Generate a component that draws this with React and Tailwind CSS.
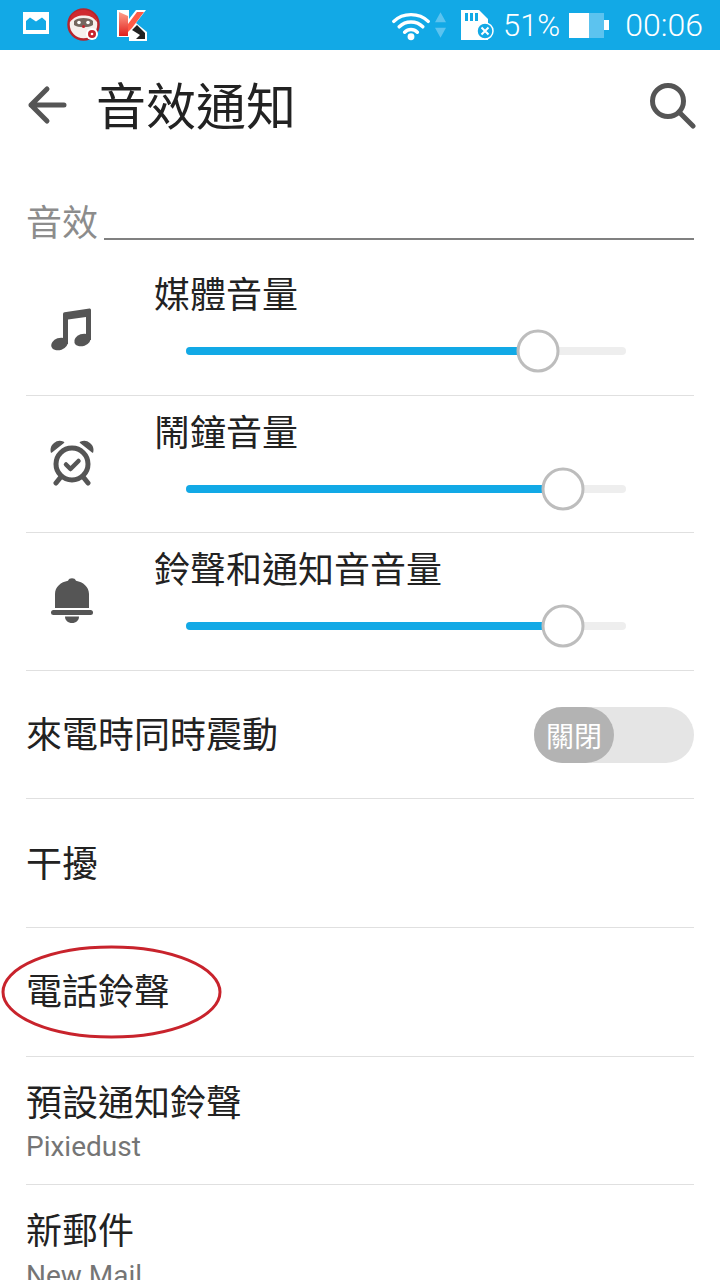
import React from 'react';

const cjk = "font-['Noto_Sans_CJK_TC','Noto_Sans_CJK_SC',sans-serif]";

const MusicIcon = () => (
  <svg width="44" height="44" viewBox="0 0 44 44" fill="#555555">
    <path d="M13 7 Q13 5.500 14.500 5.300 L39.500 1.500 Q41 1.300 41 3 L41 33 L36 33 L36 10 L18 12.500 L18 37 L13 37 Z" />
    <ellipse cx="9.500" cy="37" rx="8.500" ry="6" transform="rotate(-20 9.500 37)" />
    <ellipse cx="32.500" cy="33" rx="8.500" ry="6" transform="rotate(-20 32.500 33)" />
  </svg>
);

const AlarmIcon = () => (
  <svg width="44" height="46" viewBox="0 0 44 46" fill="none">
    <circle cx="22" cy="24" r="16" stroke="#555555" strokeWidth="5" />
    <path d="M16 24.500 L20.500 29 L28.500 21" stroke="#555555" strokeWidth="4.500" strokeLinecap="round" strokeLinejoin="round" />
    <path d="M1.500 12 C0 5 7 -0.500 13.500 2.500 Z M42.500 12 C44 5 37 -0.500 30.500 2.500 Z" fill="#555555" stroke="#555555" strokeWidth="1.500" strokeLinejoin="round" />
    <path d="M10 38 L6 43 M34 38 L38 43" stroke="#555555" strokeWidth="5" strokeLinecap="round" />
  </svg>
);

const BellIcon = () => (
  <svg width="44" height="46" viewBox="0 0 44 46" fill="#555555">
    <path d="M5 31 L5 17 C5 10 11 5 18 3.800 C19 0.500 25 0.500 26 3.800 C33 5 39 10 39 17 L39 31 Z" />
    <rect x="1" y="33" width="42" height="5" rx="2.500" />
    <path d="M15 39.500 L29 39.500 C29 43.500 26 46 22 46 C18 46 15 43.500 15 39.500 Z" />
  </svg>
);

const Slider = ({ value }) => (
  <div className="relative h-2 w-[440px] rounded-full bg-[#eeeeee]">
    <div className="h-2 rounded-full bg-[#12a9e6]" style={{ width: value }} />
    <div
      className="absolute top-1/2 h-[43px] w-[43px] -translate-x-1/2 -translate-y-1/2 rounded-full border-[3px] border-[#bdbdbd] bg-white"
      style={{ left: value }}
    />
  </div>
);

const VolumeRow = ({ icon, label, value, iconClass }) => (
  <div className="flex h-[137.500px] items-start border-b border-[#e0e0e0]">
    <div className={`flex w-[92px] justify-center ${iconClass}`}>{icon}</div>
    <div className="flex flex-col pl-[36px] pt-[9px]">
      <div className={`text-[36px] leading-[50px] text-[#222222] ${cjk}`}>{label}</div>
      <div className="ml-[32px] mt-[30px]">
        <Slider value={value} />
      </div>
    </div>
  </div>
);

const Row = ({ children, className = '' }) => (
  <div className={`flex h-[128.700px] items-center border-b border-[#e0e0e0] ${className}`}>{children}</div>
);

const StatusBar = () => (
  <div className="flex h-[50px] shrink-0 items-center bg-[#12a9e6] pl-[23px] pr-[17px] text-white">
    <svg width="26" height="22" viewBox="0 0 26 22" className="mb-1">
      <path fillRule="evenodd" fill="#fff" d="M0 0H26V22H0Z M3 18H23V9L19 5.500L13 9.500L7 5.500L3 9Z" />
    </svg>
    <svg width="34" height="36" viewBox="0 0 34 36" className="ml-[18px]">
      <circle cx="16.500" cy="17.500" r="15" fill="#f6efec" stroke="#b8242c" strokeWidth="2.500" />
      <path d="M3 15 C3 6 10 3 16.500 3 C24 3 30 8 30 15 C26 9.500 22 8.500 16.500 8.500 C11 8.500 7 10 3 15Z" fill="#cf2a30" />
      <path d="M7 14 C10 10 23 10 26 14 L26 18 C22 21 11 21 7 18Z" fill="#75675f" />
      <circle cx="12" cy="15.500" r="1.800" fill="#fff" />
      <circle cx="21" cy="15.500" r="1.800" fill="#fff" />
      <circle cx="16.500" cy="19.500" r="1.500" fill="#c8232c" />
      <circle cx="25" cy="27" r="6" fill="#fff" />
      <circle cx="25" cy="27" r="4" fill="#c8232c" />
      <circle cx="25" cy="27" r="1.300" fill="#fff" />
    </svg>
    <svg width="30" height="31" viewBox="0 0 30 31" className="ml-[16px]">
      <defs>
        <linearGradient id="k" x1="0" y1="0" x2="0" y2="1">
          <stop offset="0" stopColor="#ffa08c" />
          <stop offset="1" stopColor="#e0201c" />
        </linearGradient>
      </defs>
      <path d="M0 0H12V9L19 0H29L19 13L30 22V31H12V27H0Z" fill="#fff" />
      <path d="M2 2L11 6V26H2Z" fill="url(#k)" />
      <path d="M11 14L20 2H27L15 18L11 22Z" fill="#ff5a45" />
      <path d="M15 20L20 15L28 23V29H19L23 25Z" fill="#222" />
    </svg>

    <svg width="38" height="34" viewBox="0 0 42 34" className="ml-auto">
      <path d="M2 13 C12 3 30 3 40 13 M8 19 C15 12 27 12 34 19 M14 25 C18 21 24 21 28 25" fill="none" stroke="#fff" strokeWidth="3.800" strokeLinecap="round" />
      <circle cx="21" cy="30" r="3.800" fill="#fff" />
    </svg>
    <svg width="11" height="28" viewBox="0 0 12 30" className="ml-[5px]">
      <path d="M6 1L12 12H0Z M6 29L12 18H0Z" fill="#5cc3ef" />
    </svg>
    <svg width="33" height="30" viewBox="0 0 33 30" className="ml-[15px]">
      <path d="M0 0H18L27 9V30H0Z" fill="#fff" />
      <path d="M4 3H7V11H4Z M9 3H12V11H9Z M14 3H17V11H14Z" fill="#12a9e6" />
      <circle cx="24" cy="21" r="8" fill="#12a9e6" stroke="#fff" strokeWidth="1.500" />
      <path d="M20.500 17.500L27.500 24.500M27.500 17.500L20.500 24.500" stroke="#fff" strokeWidth="2" />
    </svg>
    <span className="ml-[9px] font-['Roboto',sans-serif] text-[31px] font-light leading-none">51%</span>
    <div className="ml-[9px] flex items-center">
      <div className="flex h-[25px] w-[35px] bg-[#5cc3ef]">
        <div className="h-full w-[20px] bg-white" />
      </div>
      <div className="h-[10px] w-[5px] bg-white" />
    </div>
    <span className="ml-[16px] font-['Roboto',sans-serif] text-[32px] font-light leading-none">00:06</span>
  </div>
);

export default function App() {
  return (
    <div className="h-[1280px] w-[720px] overflow-hidden bg-white">
      <StatusBar />

      {/* Header */}
      <div className="flex h-[110px] items-center pl-[27px] pr-[24px]">
        <svg width="40" height="40" viewBox="0 0 40 40" fill="none" stroke="#555555" strokeWidth="5" strokeLinecap="round" strokeLinejoin="round">
          <path d="M37 20H4 M20 4L4 20L20 36" />
        </svg>
        <h1 className={`mb-[5px] ml-[29px] text-[50px] font-normal leading-none text-[#222222] ${cjk}`}>音效通知</h1>
        <svg width="48" height="48" viewBox="0 0 48 48" fill="none" stroke="#555555" strokeLinecap="round" className="ml-auto">
          <circle cx="20" cy="20" r="15.500" strokeWidth="5" />
          <path d="M31 31L45 45" strokeWidth="5" />
        </svg>
      </div>

      <div className="px-[26px]">
        {/* Section title */}
        <div className="flex h-[98px] items-start pt-[36px]">
          <span className={`text-[36px] leading-[48px] text-[#8c8c8c] ${cjk}`}>音效</span>
          <div className="ml-[6px] mt-[42px] h-[2px] flex-1 bg-[#808080]" />
        </div>

        <VolumeRow icon={<MusicIcon />} label="媒體音量" value={352} iconClass="pt-[49px]" />
        <VolumeRow icon={<AlarmIcon />} label="鬧鐘音量" value={377} iconClass="pt-[44px]" />
        <VolumeRow icon={<BellIcon />} label="鈴聲和通知音音量" value={377} iconClass="pt-[44px]" />

        <Row className="justify-between">
          <span className={`-mt-[5px] text-[36px] text-[#222222] ${cjk}`}>來電時同時震動</span>
          <div className="mt-[2px] flex h-[56px] w-[160px] rounded-full bg-[#e5e5e5]">
            <div className={`flex h-full w-[80px] items-center justify-center rounded-full bg-[#b3b3b3] text-[28px] text-white ${cjk}`}>關閉</div>
          </div>
        </Row>
        <Row>
          <span className={`-mt-[5px] text-[36px] text-[#222222] ${cjk}`}>干擾</span>
        </Row>
        <Row className="relative">
          <span className={`-mt-[5px] text-[36px] text-[#222222] ${cjk}`}>電話鈴聲</span>
          {/* Red hand-drawn circle on top of the row */}
          <svg width="224" height="96" viewBox="0 0 224 96" fill="none" className="absolute -left-[26px] top-[17px]">
            <ellipse cx="111.500" cy="47" rx="108.500" ry="45" stroke="#c8232c" strokeWidth="3" />
          </svg>
        </Row>
        <Row className="flex-col !items-start justify-center">
          <span className={`-mt-[2px] text-[36px] leading-[50px] text-[#222222] ${cjk}`}>預設通知鈴聲</span>
          <span className="mt-[5px] font-['Roboto',sans-serif] text-[28px] leading-[34px] text-[#757575]">Pixiedust</span>
        </Row>
        <div className="flex flex-col pt-[18px]">
          <span className={`text-[36px] leading-[50px] text-[#222222] ${cjk}`}>新郵件</span>
          <span className="mt-[6px] font-['Roboto',sans-serif] text-[28px] leading-[34px] text-[#757575]">New Mail</span>
        </div>
      </div>
    </div>
  );
}
